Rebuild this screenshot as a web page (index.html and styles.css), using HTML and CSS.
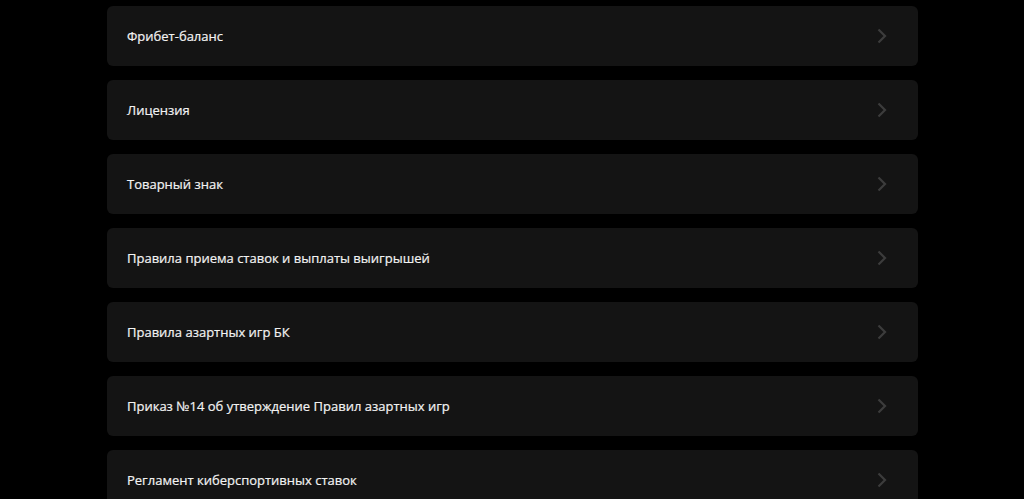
FILE: index.html
```html
<!DOCTYPE html>
<html lang="ru">
<head>
<meta charset="utf-8">
<link rel="stylesheet" href="styles.css">
</head>
<body>
<ul class="list">
  <li class="item"><span class="label">Фрибет-баланс</span><svg class="chev" viewBox="0 0 12 16"><path d="M2.5 1.5 L9 8 L2.5 14.5"/></svg></li>
  <li class="item"><span class="label">Лицензия</span><svg class="chev" viewBox="0 0 12 16"><path d="M2.5 1.5 L9 8 L2.5 14.5"/></svg></li>
  <li class="item"><span class="label">Товарный знак</span><svg class="chev" viewBox="0 0 12 16"><path d="M2.5 1.5 L9 8 L2.5 14.5"/></svg></li>
  <li class="item"><span class="label">Правила приема ставок и выплаты выигрышей</span><svg class="chev" viewBox="0 0 12 16"><path d="M2.5 1.5 L9 8 L2.5 14.5"/></svg></li>
  <li class="item"><span class="label">Правила азартных игр БК</span><svg class="chev" viewBox="0 0 12 16"><path d="M2.5 1.5 L9 8 L2.5 14.5"/></svg></li>
  <li class="item"><span class="label">Приказ №14 об утверждение Правил азартных игр</span><svg class="chev" viewBox="0 0 12 16"><path d="M2.5 1.5 L9 8 L2.5 14.5"/></svg></li>
  <li class="item"><span class="label">Регламент киберспортивных ставок</span><svg class="chev" viewBox="0 0 12 16"><path d="M2.5 1.5 L9 8 L2.5 14.5"/></svg></li>
</ul>
</body>
</html>
```
FILE: styles.css
```css
html, body {
  margin: 0;
  padding: 0;
  background: #000;
  height: 100%;
  overflow: hidden;
}
.list {
  list-style: none;
  margin: 0;
  padding: 6px 0 0 107px;
  width: 811px;
  display: flex;
  flex-direction: column;
  gap: 14px;
}
.item {
  height: 60px;
  box-sizing: border-box;
  background: #141414;
  border-radius: 6px;
  display: flex;
  align-items: center;
  justify-content: space-between;
  padding: 0 30px 0 20px;
}
.label {
  font-family: "Open Sans", "Noto Sans", sans-serif;
  font-size: 13px;
  font-weight: 500;
  color: #f2f2f2;
  -webkit-text-stroke: 0.2px #f2f2f2;
}
.chev {
  width: 12px;
  height: 16px;
  fill: none;
  stroke: #3c3c3c;
  stroke-width: 2.2;
}
```
